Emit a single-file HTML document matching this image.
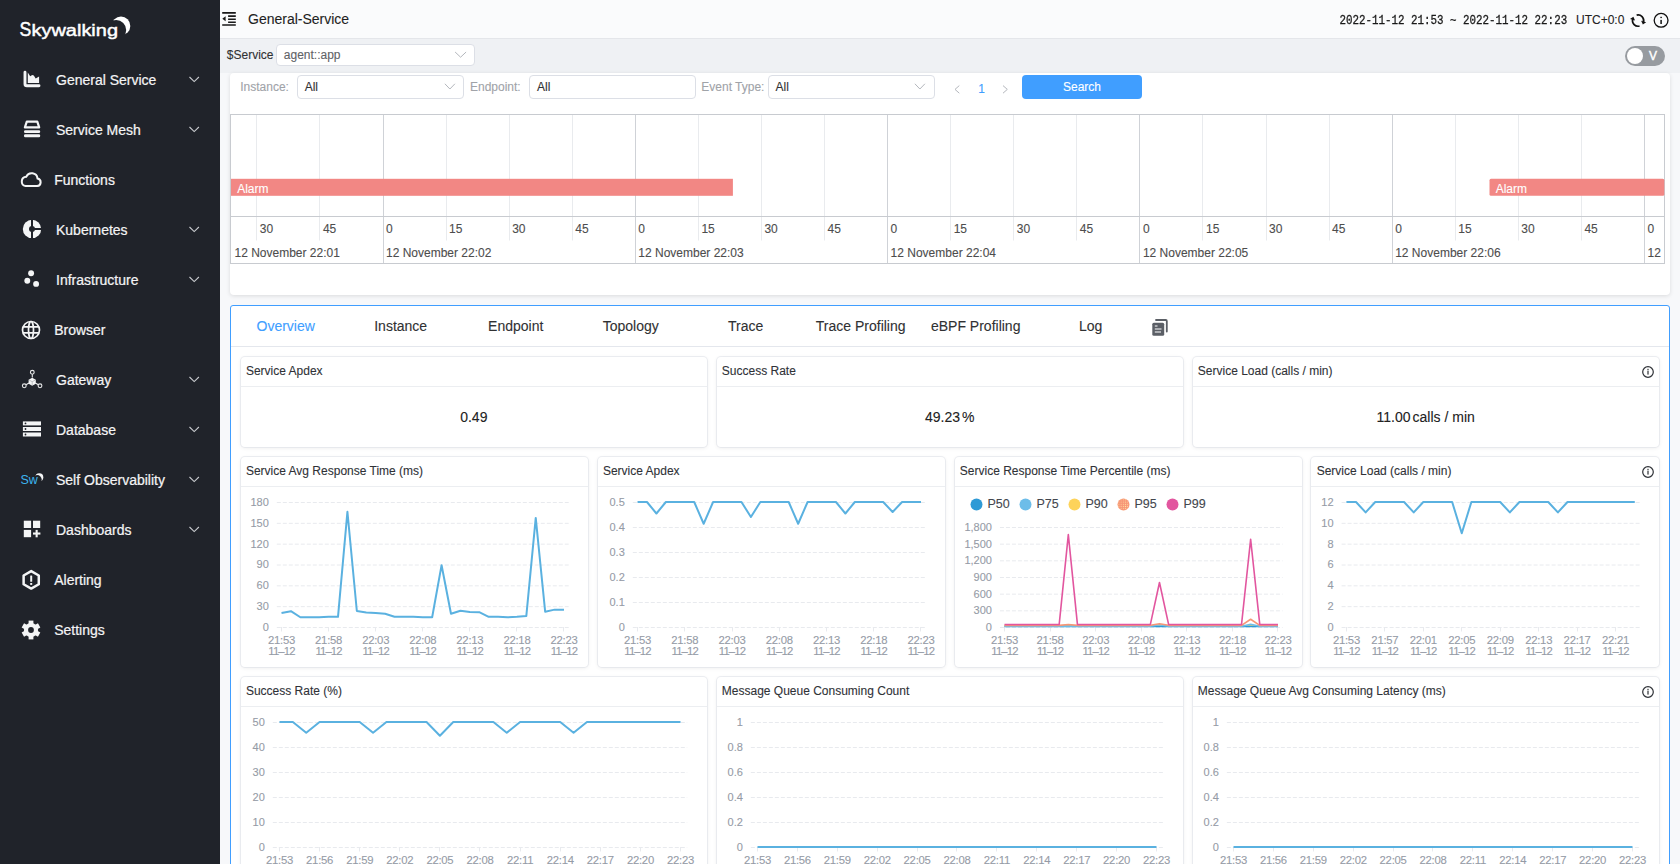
<!DOCTYPE html><html><head><meta charset="utf-8"><style>
html,body{margin:0;padding:0;width:1680px;height:864px;overflow:hidden;background:#f7f8fa;font-family:"Liberation Sans",sans-serif}
.t{position:absolute;white-space:nowrap;-webkit-text-stroke-width:0.1px}
.b{position:absolute}
svg{overflow:visible}
</style></head><body>
<div class="b" style="left:220px;top:0px;width:1460px;height:864px;background:#f7f8fa"></div>
<div class="b" style="left:220px;top:0px;width:1460px;height:38px;background:#fafbfc"></div>
<div class="b" style="left:220px;top:38px;width:1460px;height:35px;background:#eff1f4;border-top:1px solid #e4e6ea;box-sizing:border-box"></div>
<div class="b" style="left:0px;top:0px;width:220px;height:864px;background:#20232a"></div>
<div class="t" style="left:56.00px;top:73.05px;font-size:14px;line-height:14px;color:#f4f4f5;-webkit-text-stroke-width:0.22px">General Service</div>
<div class="t" style="left:56.00px;top:123.05px;font-size:14px;line-height:14px;color:#f4f4f5;-webkit-text-stroke-width:0.22px">Service Mesh</div>
<div class="t" style="left:54.20px;top:173.05px;font-size:14px;line-height:14px;color:#f4f4f5;-webkit-text-stroke-width:0.22px">Functions</div>
<div class="t" style="left:56.00px;top:223.05px;font-size:14px;line-height:14px;color:#f4f4f5;-webkit-text-stroke-width:0.22px">Kubernetes</div>
<div class="t" style="left:56.00px;top:273.05px;font-size:14px;line-height:14px;color:#f4f4f5;-webkit-text-stroke-width:0.22px">Infrastructure</div>
<div class="t" style="left:54.20px;top:323.05px;font-size:14px;line-height:14px;color:#f4f4f5;-webkit-text-stroke-width:0.22px">Browser</div>
<div class="t" style="left:56.00px;top:373.05px;font-size:14px;line-height:14px;color:#f4f4f5;-webkit-text-stroke-width:0.22px">Gateway</div>
<div class="t" style="left:56.00px;top:423.05px;font-size:14px;line-height:14px;color:#f4f4f5;-webkit-text-stroke-width:0.22px">Database</div>
<div class="t" style="left:56.00px;top:473.05px;font-size:14px;line-height:14px;color:#f4f4f5;-webkit-text-stroke-width:0.22px">Self Observability</div>
<div class="t" style="left:56.00px;top:523.05px;font-size:14px;line-height:14px;color:#f4f4f5;-webkit-text-stroke-width:0.22px">Dashboards</div>
<div class="t" style="left:54.20px;top:573.05px;font-size:14px;line-height:14px;color:#f4f4f5;-webkit-text-stroke-width:0.22px">Alerting</div>
<div class="t" style="left:54.20px;top:623.05px;font-size:14px;line-height:14px;color:#f4f4f5;-webkit-text-stroke-width:0.22px">Settings</div>
<svg class="b" style="left:0;top:0" width="220" height="864"><path d="M189.5,77.0 L194.2,81.6 L198.9,77.0" fill="none" stroke="#c9cbcf" stroke-width="1.1"/><path d="M189.5,127.0 L194.2,131.6 L198.9,127.0" fill="none" stroke="#c9cbcf" stroke-width="1.1"/><path d="M189.5,227.0 L194.2,231.6 L198.9,227.0" fill="none" stroke="#c9cbcf" stroke-width="1.1"/><path d="M189.5,277.0 L194.2,281.6 L198.9,277.0" fill="none" stroke="#c9cbcf" stroke-width="1.1"/><path d="M189.5,377.0 L194.2,381.6 L198.9,377.0" fill="none" stroke="#c9cbcf" stroke-width="1.1"/><path d="M189.5,427.0 L194.2,431.6 L198.9,427.0" fill="none" stroke="#c9cbcf" stroke-width="1.1"/><path d="M189.5,477.0 L194.2,481.6 L198.9,477.0" fill="none" stroke="#c9cbcf" stroke-width="1.1"/><path d="M189.5,527.0 L194.2,531.6 L198.9,527.0" fill="none" stroke="#c9cbcf" stroke-width="1.1"/><path d="M25,72.2 V84 Q25,85.8 26.8,85.8 H39" fill="none" stroke="#f4f5f6" stroke-width="2.9" stroke-linecap="round"/><path d="M27.8,72.6 L30.2,76.3 L32.2,75 L33.8,75.6 L35.7,78.6 L39.1,76.6 V83.1 H27.8 Z" fill="#f4f5f6"/><path d="M26.8,121.7 H37.3 L39.2,127.4 H24.9 Z" fill="none" stroke="#f4f5f6" stroke-width="2.2" stroke-linejoin="round"/><rect x="24" y="130.3" width="16.2" height="2.7" rx="1.3" fill="#f4f5f6"/><rect x="24" y="134.3" width="16.2" height="2.9" rx="1.3" fill="#f4f5f6"/><path d="M25.6,186.1 H37.2 A3.9,3.9 0 0 0 37.5,178.4 A5.9,5.9 0 0 0 26.3,176.7 A4.75,4.75 0 0 0 25.6,186.1 Z" fill="none" stroke="#f4f5f6" stroke-width="2"/><mask id="km"><rect x="0" y="200" width="60" height="60" fill="#fff"/><rect x="31" y="215" width="2" height="30" fill="#000"/><rect x="32" y="228" width="15" height="2" fill="#000"/><circle cx="32" cy="229" r="3" fill="#000"/></mask><circle cx="32" cy="228.9" r="9.2" fill="#f4f5f6" mask="url(#km)"/><circle cx="31.1" cy="273.3" r="2.95" fill="#f4f5f6"/><circle cx="27.3" cy="280.8" r="2.95" fill="#f4f5f6"/><circle cx="36.1" cy="283.9" r="2.95" fill="#f4f5f6"/><g fill="none" stroke="#f4f5f6" stroke-width="1.7"><circle cx="31" cy="330" r="8.5"/><ellipse cx="31" cy="330" rx="2.5" ry="8.5"/><path d="M23,326.9 H39 M23,332.9 H39"/></g><g fill="none" stroke="#e8e9ea" stroke-width="1.1"><circle cx="32.3" cy="372.3" r="1.9"/><circle cx="24.3" cy="385.8" r="1.9"/><circle cx="40" cy="385.8" r="1.9"/><path d="M32.3,374.2 V377.5 M26,384.8 L29,383 M38.3,384.8 L35.4,383"/></g><path d="M32.2,377.8 L35.8,379.8 V383.7 L32.2,385.7 L28.6,383.7 V379.8 Z" fill="#f4f5f6"/><path d="M32.2,381.7 V385.2 M32.2,381.7 L29.2,380.1 M32.2,381.7 L35.2,380.1" stroke="#9a9ca0" stroke-width="0.6" fill="none"/><rect x="22.9" y="421.4" width="18.1" height="4" fill="#f4f5f6"/><circle cx="25.5" cy="423.4" r="0.9" fill="#20232a"/><rect x="22.9" y="427" width="18.1" height="4" fill="#f4f5f6"/><circle cx="25.5" cy="429" r="0.9" fill="#20232a"/><rect x="22.9" y="432.5" width="18.1" height="4" fill="#f4f5f6"/><circle cx="25.5" cy="434.5" r="0.9" fill="#20232a"/><text x="20.6" y="484.2" font-family="Liberation Sans" font-size="12.5" fill="#3cb4ef" letter-spacing="-0.3">Sw</text><mask id="swm"><rect x="30" y="465" width="20" height="20" fill="#fff"/><circle cx="37.2" cy="479.6" r="4.5" fill="#000"/></mask><circle cx="39.3" cy="477.3" r="4" fill="#f4f5f6" mask="url(#swm)"/><rect x="23.8" y="520.7" width="7.3" height="7.3" fill="#f4f5f6"/><rect x="33" y="520.7" width="7.2" height="7.3" fill="#f4f5f6"/><rect x="23.8" y="529.9" width="7.3" height="7.3" fill="#f4f5f6"/><rect x="33" y="532.5" width="7.4" height="2.1" fill="#f4f5f6"/><rect x="35.6" y="529.9" width="2.1" height="7.4" fill="#f4f5f6"/><polygon points="31.20,571.10 38.78,575.48 38.78,584.23 31.20,588.60 23.62,584.23 23.62,575.48" fill="none" stroke="#f4f5f6" stroke-width="2.5" stroke-linejoin="round"/><rect x="30.2" y="575.4" width="2" height="6.3" rx="0.5" fill="#f4f5f6"/><rect x="30.2" y="583" width="2" height="1.9" fill="#f4f5f6"/><circle cx="31" cy="630" r="7.1" fill="#f4f5f6"/><rect x="28.6" y="620.6" width="4.8" height="4" fill="#f4f5f6" transform="rotate(0 31 630)"/><rect x="28.6" y="620.6" width="4.8" height="4" fill="#f4f5f6" transform="rotate(60 31 630)"/><rect x="28.6" y="620.6" width="4.8" height="4" fill="#f4f5f6" transform="rotate(120 31 630)"/><rect x="28.6" y="620.6" width="4.8" height="4" fill="#f4f5f6" transform="rotate(180 31 630)"/><rect x="28.6" y="620.6" width="4.8" height="4" fill="#f4f5f6" transform="rotate(240 31 630)"/><rect x="28.6" y="620.6" width="4.8" height="4" fill="#f4f5f6" transform="rotate(300 31 630)"/><circle cx="31" cy="630" r="2.9" fill="#20232a"/><text x="19.4" y="36.3" font-family="Liberation Sans" font-size="20.5" fill="#fff" stroke="#fff" stroke-width="0.45" textLength="11.8" lengthAdjust="spacingAndGlyphs">S</text><text x="31.5" y="36.3" font-family="Liberation Sans" font-size="16.9" fill="#fff" stroke="#fff" stroke-width="0.45" textLength="86.5" lengthAdjust="spacingAndGlyphs">kywalking</text><mask id="moon"><rect x="100" y="5" width="40" height="40" fill="#fff"/><circle cx="116.2" cy="30.1" r="10" fill="#000"/></mask><circle cx="121" cy="25.9" r="9.3" fill="#fff" mask="url(#moon)"/></svg>
<svg class="b" style="left:0;top:0" width="1680" height="40"><path d="M222.2,12.9 H235.8 M228.1,16.1 H235.8 M228.1,19.2 H235.8 M228.1,22.2 H235.8 M222.2,25 H235.8" stroke="#1a1a1a" stroke-width="1.6"/><path d="M222.3,18.7 L225.6,16.2 V21.3 Z" fill="#1a1a1a"/><path d="M1636.65,15.19 A5.6,5.6 0 0 1 1643.51,22.05" fill="none" stroke="#111" stroke-width="1.7"/><path d="M1642.84,24.56 L1646.18,22.14 L1641.15,20.80 Z" fill="#111"/><path d="M1639.55,26.01 A5.6,5.6 0 0 1 1632.69,19.15" fill="none" stroke="#111" stroke-width="1.7"/><path d="M1633.36,16.64 L1630.02,19.06 L1635.05,20.40 Z" fill="#111"/><circle cx="1661.1" cy="20.3" r="6.9" fill="none" stroke="#111" stroke-width="1.3"/><rect x="1660.35" y="19.9" width="1.5" height="4.1" fill="#111"/><rect x="1660.35" y="16.8" width="1.5" height="1.3" fill="#111"/></svg>
<div class="t" style="left:248.00px;top:12.45px;font-size:14px;line-height:14px;color:#1f1f1f;">General-Service</div>
<div class="t" style="left:1339.4px;top:14.12px;font-family:'Liberation Mono', monospace;font-size:10.85px;line-height:10.85px;color:#1a1a1a;-webkit-text-stroke:0.25px #1a1a1a;transform:scaleY(1.25);transform-origin:0 0;">2022-11-12 21:53 ~ 2022-11-12 22:23</div>
<div class="t" style="left:1576.00px;top:13.64px;font-size:12px;line-height:12px;color:#222;">UTC+0:0</div>
<div class="t" style="left:226.80px;top:49.14px;font-size:12px;line-height:12px;color:#303133;">$Service</div>
<div class="b" style="left:276px;top:44px;width:199px;height:22px;background:#fff;border:1px solid #dcdfe6;border-radius:4px;box-sizing:border-box"></div>
<div class="t" style="left:283.80px;top:49.14px;font-size:12px;line-height:12px;color:#606266;">agent::app</div>
<div class="b" style="left:1625px;top:46px;width:40px;height:20px;background:#979ba0;border-radius:10px;box-sizing:border-box"></div>
<div class="b" style="left:1627px;top:48px;width:16px;height:16px;background:#fff;border-radius:50%"></div>
<div class="t" style="left:1649.00px;top:49.84px;font-size:12px;line-height:12px;color:#fff;-webkit-text-stroke-width:0.4px">V</div>
<div class="b" style="left:229.5px;top:73px;width:1440.5px;height:222px;background:#fff;border-radius:4px;box-shadow:0 1px 4px rgba(0,0,0,0.12)"></div>
<div class="t" style="left:240.20px;top:80.74px;font-size:12px;line-height:12px;color:#a0a3a8;">Instance:</div>
<div class="b" style="left:297px;top:75px;width:167px;height:23.5px;background:#fff;border:1px solid #dcdfe6;border-radius:4px;box-sizing:border-box"></div>
<div class="t" style="left:304.70px;top:80.84px;font-size:12px;line-height:12px;color:#303133;">All</div>
<div class="t" style="left:470.00px;top:80.74px;font-size:12px;line-height:12px;color:#a0a3a8;">Endpoint:</div>
<div class="b" style="left:529px;top:75px;width:167px;height:23.5px;background:#fff;border:1px solid #dcdfe6;border-radius:4px;box-sizing:border-box"></div>
<div class="t" style="left:537.00px;top:80.84px;font-size:12px;line-height:12px;color:#303133;">All</div>
<div class="t" style="left:701.30px;top:80.74px;font-size:12px;line-height:12px;color:#a0a3a8;">Event Type:</div>
<div class="b" style="left:768px;top:75px;width:166.5px;height:23.5px;background:#fff;border:1px solid #dcdfe6;border-radius:4px;box-sizing:border-box"></div>
<div class="t" style="left:775.60px;top:80.84px;font-size:12px;line-height:12px;color:#303133;">All</div>
<div class="b" style="left:1022px;top:75px;width:120px;height:23.5px;background:#409eff;border-radius:4px"></div>
<div class="t" style="left:1022.00px;width:120px;top:80.74px;font-size:12px;line-height:12px;color:#fff;text-align:center;">Search</div>
<div class="t" style="left:978.30px;top:82.74px;font-size:12px;line-height:12px;color:#409eff;">1</div>
<svg class="b" style="left:0;top:0" width="1680" height="110"><path d="M455.1,52.0 L460.6,57.2 L466.1,52.0" fill="none" stroke="#b4b7bd" stroke-width="1"/><path d="M444.9,83.80000000000001 L449.9,89.0 L454.9,83.80000000000001" fill="none" stroke="#b4b7bd" stroke-width="1"/><path d="M914.9,83.80000000000001 L919.9,89.0 L924.9,83.80000000000001" fill="none" stroke="#b4b7bd" stroke-width="1"/><path d="M959.3,85.6 L955,89.4 L959.3,93.2 M1003,85.6 L1007.3,89.4 L1003,93.2" fill="none" stroke="#b4b7bd" stroke-width="1"/></svg>
<svg class="b" style="left:0;top:0" width="1680" height="300"><line x1="256.50" y1="114.5" x2="256.50" y2="240.5" stroke="#e9ebee" stroke-width="1"/><line x1="319.50" y1="114.5" x2="319.50" y2="240.5" stroke="#e9ebee" stroke-width="1"/><line x1="446.50" y1="114.5" x2="446.50" y2="240.5" stroke="#e9ebee" stroke-width="1"/><line x1="509.50" y1="114.5" x2="509.50" y2="240.5" stroke="#e9ebee" stroke-width="1"/><line x1="572.50" y1="114.5" x2="572.50" y2="240.5" stroke="#e9ebee" stroke-width="1"/><line x1="698.50" y1="114.5" x2="698.50" y2="240.5" stroke="#e9ebee" stroke-width="1"/><line x1="761.50" y1="114.5" x2="761.50" y2="240.5" stroke="#e9ebee" stroke-width="1"/><line x1="824.50" y1="114.5" x2="824.50" y2="240.5" stroke="#e9ebee" stroke-width="1"/><line x1="950.50" y1="114.5" x2="950.50" y2="240.5" stroke="#e9ebee" stroke-width="1"/><line x1="1013.50" y1="114.5" x2="1013.50" y2="240.5" stroke="#e9ebee" stroke-width="1"/><line x1="1076.50" y1="114.5" x2="1076.50" y2="240.5" stroke="#e9ebee" stroke-width="1"/><line x1="1202.50" y1="114.5" x2="1202.50" y2="240.5" stroke="#e9ebee" stroke-width="1"/><line x1="1266.50" y1="114.5" x2="1266.50" y2="240.5" stroke="#e9ebee" stroke-width="1"/><line x1="1329.50" y1="114.5" x2="1329.50" y2="240.5" stroke="#e9ebee" stroke-width="1"/><line x1="1455.50" y1="114.5" x2="1455.50" y2="240.5" stroke="#e9ebee" stroke-width="1"/><line x1="1518.50" y1="114.5" x2="1518.50" y2="240.5" stroke="#e9ebee" stroke-width="1"/><line x1="1581.50" y1="114.5" x2="1581.50" y2="240.5" stroke="#e9ebee" stroke-width="1"/><line x1="383.50" y1="114.5" x2="383.50" y2="263.5" stroke="#cfd2d7" stroke-width="1"/><line x1="635.50" y1="114.5" x2="635.50" y2="263.5" stroke="#cfd2d7" stroke-width="1"/><line x1="887.50" y1="114.5" x2="887.50" y2="263.5" stroke="#cfd2d7" stroke-width="1"/><line x1="1139.50" y1="114.5" x2="1139.50" y2="263.5" stroke="#cfd2d7" stroke-width="1"/><line x1="1392.50" y1="114.5" x2="1392.50" y2="263.5" stroke="#cfd2d7" stroke-width="1"/><line x1="1644.50" y1="114.5" x2="1644.50" y2="263.5" stroke="#cfd2d7" stroke-width="1"/><rect x="230.5" y="114.5" width="1434.00" height="149.00" fill="none" stroke="#c8cbd0" stroke-width="1"/><line x1="230.5" y1="216.5" x2="1664.5" y2="216.5" stroke="#c8cbd0" stroke-width="1"/><rect x="231" y="178.8" width="501.9" height="17" fill="#f28784"/><rect x="1489.5" y="178.8" width="174.8" height="17" rx="1.5" fill="#f28784"/></svg>
<div class="t" style="left:237.20px;top:183.24px;font-size:12px;line-height:12px;color:#fff;">Alarm</div>
<div class="t" style="left:1495.70px;top:183.24px;font-size:12px;line-height:12px;color:#fff;">Alarm</div>
<div class="t" style="left:259.85px;top:222.84px;font-size:12px;line-height:12px;color:#4d4d4d;">30</div>
<div class="t" style="left:322.93px;top:222.84px;font-size:12px;line-height:12px;color:#4d4d4d;">45</div>
<div class="t" style="left:449.07px;top:222.84px;font-size:12px;line-height:12px;color:#4d4d4d;">15</div>
<div class="t" style="left:512.15px;top:222.84px;font-size:12px;line-height:12px;color:#4d4d4d;">30</div>
<div class="t" style="left:575.23px;top:222.84px;font-size:12px;line-height:12px;color:#4d4d4d;">45</div>
<div class="t" style="left:701.38px;top:222.84px;font-size:12px;line-height:12px;color:#4d4d4d;">15</div>
<div class="t" style="left:764.45px;top:222.84px;font-size:12px;line-height:12px;color:#4d4d4d;">30</div>
<div class="t" style="left:827.52px;top:222.84px;font-size:12px;line-height:12px;color:#4d4d4d;">45</div>
<div class="t" style="left:953.68px;top:222.84px;font-size:12px;line-height:12px;color:#4d4d4d;">15</div>
<div class="t" style="left:1016.75px;top:222.84px;font-size:12px;line-height:12px;color:#4d4d4d;">30</div>
<div class="t" style="left:1079.83px;top:222.84px;font-size:12px;line-height:12px;color:#4d4d4d;">45</div>
<div class="t" style="left:1205.98px;top:222.84px;font-size:12px;line-height:12px;color:#4d4d4d;">15</div>
<div class="t" style="left:1269.05px;top:222.84px;font-size:12px;line-height:12px;color:#4d4d4d;">30</div>
<div class="t" style="left:1332.12px;top:222.84px;font-size:12px;line-height:12px;color:#4d4d4d;">45</div>
<div class="t" style="left:1458.28px;top:222.84px;font-size:12px;line-height:12px;color:#4d4d4d;">15</div>
<div class="t" style="left:1521.35px;top:222.84px;font-size:12px;line-height:12px;color:#4d4d4d;">30</div>
<div class="t" style="left:1584.43px;top:222.84px;font-size:12px;line-height:12px;color:#4d4d4d;">45</div>
<div class="t" style="left:386.00px;top:222.84px;font-size:12px;line-height:12px;color:#4d4d4d;">0</div>
<div class="t" style="left:638.30px;top:222.84px;font-size:12px;line-height:12px;color:#4d4d4d;">0</div>
<div class="t" style="left:890.60px;top:222.84px;font-size:12px;line-height:12px;color:#4d4d4d;">0</div>
<div class="t" style="left:1142.90px;top:222.84px;font-size:12px;line-height:12px;color:#4d4d4d;">0</div>
<div class="t" style="left:1395.20px;top:222.84px;font-size:12px;line-height:12px;color:#4d4d4d;">0</div>
<div class="t" style="left:1647.50px;top:222.84px;font-size:12px;line-height:12px;color:#4d4d4d;">0</div>
<div class="t" style="left:234.50px;top:247.14px;font-size:12px;line-height:12px;color:#4d4d4d;">12 November 22:01</div>
<div class="t" style="left:386.00px;top:247.14px;font-size:12px;line-height:12px;color:#4d4d4d;">12 November 22:02</div>
<div class="t" style="left:638.30px;top:247.14px;font-size:12px;line-height:12px;color:#4d4d4d;">12 November 22:03</div>
<div class="t" style="left:890.60px;top:247.14px;font-size:12px;line-height:12px;color:#4d4d4d;">12 November 22:04</div>
<div class="t" style="left:1142.90px;top:247.14px;font-size:12px;line-height:12px;color:#4d4d4d;">12 November 22:05</div>
<div class="t" style="left:1395.20px;top:247.14px;font-size:12px;line-height:12px;color:#4d4d4d;">12 November 22:06</div>
<div class="t" style="left:1647.50px;top:247.14px;font-size:12px;line-height:12px;color:#4d4d4d;">12</div>
<div class="b" style="left:230px;top:305px;width:1440px;height:600px;background:#fff;border:1px solid #409eff;border-radius:3px;box-sizing:border-box"></div>
<div class="b" style="left:231px;top:346px;width:1438px;height:1px;background:#e4e7ed"></div>
<div class="t" style="left:228.20px;width:115px;top:319.35px;font-size:14px;line-height:14px;color:#409eff;text-align:center;">Overview</div>
<div class="t" style="left:343.20px;width:115px;top:319.35px;font-size:14px;line-height:14px;color:#303133;text-align:center;">Instance</div>
<div class="t" style="left:458.20px;width:115px;top:319.35px;font-size:14px;line-height:14px;color:#303133;text-align:center;">Endpoint</div>
<div class="t" style="left:573.20px;width:115px;top:319.35px;font-size:14px;line-height:14px;color:#303133;text-align:center;">Topology</div>
<div class="t" style="left:688.20px;width:115px;top:319.35px;font-size:14px;line-height:14px;color:#303133;text-align:center;">Trace</div>
<div class="t" style="left:803.20px;width:115px;top:319.35px;font-size:14px;line-height:14px;color:#303133;text-align:center;">Trace Profiling</div>
<div class="t" style="left:918.20px;width:115px;top:319.35px;font-size:14px;line-height:14px;color:#303133;text-align:center;">eBPF Profiling</div>
<div class="t" style="left:1033.20px;width:115px;top:319.35px;font-size:14px;line-height:14px;color:#303133;text-align:center;">Log</div>
<svg class="b" style="left:1148px;top:315px" width="24" height="24"><g transform="translate(-1148,-315)"><path d="M1156,320 H1165.8 Q1166.8,320 1166.8,321 V331.6" fill="none" stroke="#5b5f66" stroke-width="1.8" stroke-linecap="round"/><rect x="1152.3" y="322.7" width="11.9" height="13" rx="1.5" fill="#5b5f66"/><path d="M1154.8,326 H1157.5 M1154.8,329 H1161.5 M1154.8,332 H1161" stroke="#fff" stroke-width="1.2"/></g></svg>
<div class="b" style="left:240.6px;top:357px;width:466.4px;height:90px;background:#fff;border-radius:4px;box-shadow:0 0 0 1px rgba(215,220,228,0.45),0 1px 4px rgba(0,0,0,0.08);"></div>
<div class="b" style="left:240.6px;top:386px;width:466.4px;height:1px;background:#eceef1"></div>
<div class="t" style="left:245.90px;top:364.84px;font-size:12px;line-height:12px;color:#2f3237;">Service Apdex</div>
<div class="b" style="left:716.5px;top:357px;width:466.4px;height:90px;background:#fff;border-radius:4px;box-shadow:0 0 0 1px rgba(215,220,228,0.45),0 1px 4px rgba(0,0,0,0.08);"></div>
<div class="b" style="left:716.5px;top:386px;width:466.4px;height:1px;background:#eceef1"></div>
<div class="t" style="left:721.80px;top:364.84px;font-size:12px;line-height:12px;color:#2f3237;">Success Rate</div>
<div class="b" style="left:1192.5px;top:357px;width:466.4px;height:90px;background:#fff;border-radius:4px;box-shadow:0 0 0 1px rgba(215,220,228,0.45),0 1px 4px rgba(0,0,0,0.08);"></div>
<div class="b" style="left:1192.5px;top:386px;width:466.4px;height:1px;background:#eceef1"></div>
<div class="t" style="left:1197.80px;top:364.84px;font-size:12px;line-height:12px;color:#2f3237;">Service Load (calls / min)</div>
<svg class="b" style="left:1641.9px;top:365px" width="14" height="14"><circle cx="6" cy="7" r="5.3" fill="none" stroke="#2f3237" stroke-width="1.2"/><rect x="5.4" y="5.6" width="1.2" height="4" fill="#2f3237"/><rect x="5.4" y="3.8" width="1.2" height="1.2" fill="#2f3237"/></svg>
<div class="t" style="left:323.80px;width:300px;top:410.15px;font-size:14px;line-height:14px;color:#222;text-align:center;">0.49</div>
<div class="t" style="left:799.70px;width:300px;top:410.15px;font-size:14px;line-height:14px;color:#222;text-align:center;">49.23<span style="margin-left:2px">%</span></div>
<div class="t" style="left:1275.70px;width:300px;top:410.15px;font-size:14px;line-height:14px;color:#222;text-align:center;">11.00<span style="margin-left:2px">calls / min</span></div>
<div class="b" style="left:240.6px;top:457px;width:347.5px;height:210px;background:#fff;border-radius:4px;box-shadow:0 0 0 1px rgba(215,220,228,0.45),0 1px 4px rgba(0,0,0,0.08);"></div>
<div class="b" style="left:240.6px;top:486px;width:347.5px;height:1px;background:#eceef1"></div>
<div class="t" style="left:245.90px;top:464.84px;font-size:12px;line-height:12px;color:#2f3237;">Service Avg Response Time (ms)</div>
<div class="b" style="left:597.6px;top:457px;width:347.5px;height:210px;background:#fff;border-radius:4px;box-shadow:0 0 0 1px rgba(215,220,228,0.45),0 1px 4px rgba(0,0,0,0.08);"></div>
<div class="b" style="left:597.6px;top:486px;width:347.5px;height:1px;background:#eceef1"></div>
<div class="t" style="left:602.90px;top:464.84px;font-size:12px;line-height:12px;color:#2f3237;">Service Apdex</div>
<div class="b" style="left:954.5px;top:457px;width:347.5px;height:210px;background:#fff;border-radius:4px;box-shadow:0 0 0 1px rgba(215,220,228,0.45),0 1px 4px rgba(0,0,0,0.08);"></div>
<div class="b" style="left:954.5px;top:486px;width:347.5px;height:1px;background:#eceef1"></div>
<div class="t" style="left:959.80px;top:464.84px;font-size:12px;line-height:12px;color:#2f3237;">Service Response Time Percentile (ms)</div>
<div class="b" style="left:1311.4px;top:457px;width:347.5px;height:210px;background:#fff;border-radius:4px;box-shadow:0 0 0 1px rgba(215,220,228,0.45),0 1px 4px rgba(0,0,0,0.08);"></div>
<div class="b" style="left:1311.4px;top:486px;width:347.5px;height:1px;background:#eceef1"></div>
<div class="t" style="left:1316.70px;top:464.84px;font-size:12px;line-height:12px;color:#2f3237;">Service Load (calls / min)</div>
<svg class="b" style="left:1641.9px;top:465px" width="14" height="14"><circle cx="6" cy="7" r="5.3" fill="none" stroke="#2f3237" stroke-width="1.2"/><rect x="5.4" y="5.6" width="1.2" height="4" fill="#2f3237"/><rect x="5.4" y="3.8" width="1.2" height="1.2" fill="#2f3237"/></svg>
<div class="t" style="left:208.80px;width:60px;top:621.99px;font-size:11px;line-height:11px;color:#959ba6;text-align:right;">0</div>
<div class="t" style="left:208.80px;width:60px;top:601.16px;font-size:11px;line-height:11px;color:#959ba6;text-align:right;">30</div>
<div class="t" style="left:208.80px;width:60px;top:580.32px;font-size:11px;line-height:11px;color:#959ba6;text-align:right;">60</div>
<div class="t" style="left:208.80px;width:60px;top:559.49px;font-size:11px;line-height:11px;color:#959ba6;text-align:right;">90</div>
<div class="t" style="left:208.80px;width:60px;top:538.66px;font-size:11px;line-height:11px;color:#959ba6;text-align:right;">120</div>
<div class="t" style="left:208.80px;width:60px;top:517.82px;font-size:11px;line-height:11px;color:#959ba6;text-align:right;">150</div>
<div class="t" style="left:208.80px;width:60px;top:496.99px;font-size:11px;line-height:11px;color:#959ba6;text-align:right;">180</div>
<div class="t" style="left:251.51px;width:60px;top:635.13px;font-size:11.3px;line-height:11.3px;color:#959ba6;text-align:center;letter-spacing:-0.25px">21:53</div>
<div class="t" style="left:251.51px;width:60px;top:646.33px;font-size:11.3px;line-height:11.3px;color:#959ba6;text-align:center;letter-spacing:-0.85px">11–12</div>
<div class="t" style="left:298.59px;width:60px;top:635.13px;font-size:11.3px;line-height:11.3px;color:#959ba6;text-align:center;letter-spacing:-0.25px">21:58</div>
<div class="t" style="left:298.59px;width:60px;top:646.33px;font-size:11.3px;line-height:11.3px;color:#959ba6;text-align:center;letter-spacing:-0.85px">11–12</div>
<div class="t" style="left:345.67px;width:60px;top:635.13px;font-size:11.3px;line-height:11.3px;color:#959ba6;text-align:center;letter-spacing:-0.25px">22:03</div>
<div class="t" style="left:345.67px;width:60px;top:646.33px;font-size:11.3px;line-height:11.3px;color:#959ba6;text-align:center;letter-spacing:-0.85px">11–12</div>
<div class="t" style="left:392.75px;width:60px;top:635.13px;font-size:11.3px;line-height:11.3px;color:#959ba6;text-align:center;letter-spacing:-0.25px">22:08</div>
<div class="t" style="left:392.75px;width:60px;top:646.33px;font-size:11.3px;line-height:11.3px;color:#959ba6;text-align:center;letter-spacing:-0.85px">11–12</div>
<div class="t" style="left:439.83px;width:60px;top:635.13px;font-size:11.3px;line-height:11.3px;color:#959ba6;text-align:center;letter-spacing:-0.25px">22:13</div>
<div class="t" style="left:439.83px;width:60px;top:646.33px;font-size:11.3px;line-height:11.3px;color:#959ba6;text-align:center;letter-spacing:-0.85px">11–12</div>
<div class="t" style="left:486.91px;width:60px;top:635.13px;font-size:11.3px;line-height:11.3px;color:#959ba6;text-align:center;letter-spacing:-0.25px">22:18</div>
<div class="t" style="left:486.91px;width:60px;top:646.33px;font-size:11.3px;line-height:11.3px;color:#959ba6;text-align:center;letter-spacing:-0.85px">11–12</div>
<div class="t" style="left:533.99px;width:60px;top:635.13px;font-size:11.3px;line-height:11.3px;color:#959ba6;text-align:center;letter-spacing:-0.25px">22:23</div>
<div class="t" style="left:533.99px;width:60px;top:646.33px;font-size:11.3px;line-height:11.3px;color:#959ba6;text-align:center;letter-spacing:-0.85px">11–12</div>
<svg class="b" style="left:240px;top:457px" width="349" height="210"><line x1="36.80" y1="170.50" x2="328.70" y2="170.50" stroke="#e8eaee" stroke-width="1" stroke-dasharray="4 2"/><line x1="36.80" y1="149.67" x2="328.70" y2="149.67" stroke="#e8eaee" stroke-width="1" stroke-dasharray="4 2"/><line x1="36.80" y1="128.83" x2="328.70" y2="128.83" stroke="#e8eaee" stroke-width="1" stroke-dasharray="4 2"/><line x1="36.80" y1="108.00" x2="328.70" y2="108.00" stroke="#e8eaee" stroke-width="1" stroke-dasharray="4 2"/><line x1="36.80" y1="87.17" x2="328.70" y2="87.17" stroke="#e8eaee" stroke-width="1" stroke-dasharray="4 2"/><line x1="36.80" y1="66.33" x2="328.70" y2="66.33" stroke="#e8eaee" stroke-width="1" stroke-dasharray="4 2"/><line x1="36.80" y1="45.50" x2="328.70" y2="45.50" stroke="#e8eaee" stroke-width="1" stroke-dasharray="4 2"/><line x1="41.50" y1="170" x2="41.50" y2="174.50" stroke="#e8eaee" stroke-width="1"/><line x1="88.50" y1="170" x2="88.50" y2="174.50" stroke="#e8eaee" stroke-width="1"/><line x1="135.50" y1="170" x2="135.50" y2="174.50" stroke="#e8eaee" stroke-width="1"/><line x1="182.50" y1="170" x2="182.50" y2="174.50" stroke="#e8eaee" stroke-width="1"/><line x1="229.50" y1="170" x2="229.50" y2="174.50" stroke="#e8eaee" stroke-width="1"/><line x1="276.50" y1="170" x2="276.50" y2="174.50" stroke="#e8eaee" stroke-width="1"/><line x1="323.50" y1="170" x2="323.50" y2="174.50" stroke="#e8eaee" stroke-width="1"/><polyline points="41.51,155.97 50.92,154.17 60.34,160.28 69.76,160.28 79.17,160.28 88.59,159.79 98.00,159.79 107.42,54.72 116.84,154.03 126.25,155.42 135.67,156.11 145.09,156.81 154.50,159.79 163.92,159.79 173.33,159.79 182.75,160.28 192.17,160.28 201.58,108.19 211.00,156.81 220.41,153.68 229.83,154.93 239.25,155.21 248.66,159.79 258.08,159.79 267.50,160.28 276.91,159.79 286.33,158.89 295.74,60.97 305.16,154.72 314.58,152.64 323.99,152.64" fill="none" stroke="#5ab1e0" stroke-width="2" stroke-linejoin="round"/></svg>
<div class="t" style="left:564.80px;width:60px;top:621.99px;font-size:11px;line-height:11px;color:#959ba6;text-align:right;">0</div>
<div class="t" style="left:564.80px;width:60px;top:596.99px;font-size:11px;line-height:11px;color:#959ba6;text-align:right;">0.1</div>
<div class="t" style="left:564.80px;width:60px;top:571.99px;font-size:11px;line-height:11px;color:#959ba6;text-align:right;">0.2</div>
<div class="t" style="left:564.80px;width:60px;top:546.99px;font-size:11px;line-height:11px;color:#959ba6;text-align:right;">0.3</div>
<div class="t" style="left:564.80px;width:60px;top:521.99px;font-size:11px;line-height:11px;color:#959ba6;text-align:right;">0.4</div>
<div class="t" style="left:564.80px;width:60px;top:496.99px;font-size:11px;line-height:11px;color:#959ba6;text-align:right;">0.5</div>
<div class="t" style="left:607.52px;width:60px;top:635.13px;font-size:11.3px;line-height:11.3px;color:#959ba6;text-align:center;letter-spacing:-0.25px">21:53</div>
<div class="t" style="left:607.52px;width:60px;top:646.33px;font-size:11.3px;line-height:11.3px;color:#959ba6;text-align:center;letter-spacing:-0.85px">11–12</div>
<div class="t" style="left:654.77px;width:60px;top:635.13px;font-size:11.3px;line-height:11.3px;color:#959ba6;text-align:center;letter-spacing:-0.25px">21:58</div>
<div class="t" style="left:654.77px;width:60px;top:646.33px;font-size:11.3px;line-height:11.3px;color:#959ba6;text-align:center;letter-spacing:-0.85px">11–12</div>
<div class="t" style="left:702.01px;width:60px;top:635.13px;font-size:11.3px;line-height:11.3px;color:#959ba6;text-align:center;letter-spacing:-0.25px">22:03</div>
<div class="t" style="left:702.01px;width:60px;top:646.33px;font-size:11.3px;line-height:11.3px;color:#959ba6;text-align:center;letter-spacing:-0.85px">11–12</div>
<div class="t" style="left:749.25px;width:60px;top:635.13px;font-size:11.3px;line-height:11.3px;color:#959ba6;text-align:center;letter-spacing:-0.25px">22:08</div>
<div class="t" style="left:749.25px;width:60px;top:646.33px;font-size:11.3px;line-height:11.3px;color:#959ba6;text-align:center;letter-spacing:-0.85px">11–12</div>
<div class="t" style="left:796.49px;width:60px;top:635.13px;font-size:11.3px;line-height:11.3px;color:#959ba6;text-align:center;letter-spacing:-0.25px">22:13</div>
<div class="t" style="left:796.49px;width:60px;top:646.33px;font-size:11.3px;line-height:11.3px;color:#959ba6;text-align:center;letter-spacing:-0.85px">11–12</div>
<div class="t" style="left:843.73px;width:60px;top:635.13px;font-size:11.3px;line-height:11.3px;color:#959ba6;text-align:center;letter-spacing:-0.25px">22:18</div>
<div class="t" style="left:843.73px;width:60px;top:646.33px;font-size:11.3px;line-height:11.3px;color:#959ba6;text-align:center;letter-spacing:-0.85px">11–12</div>
<div class="t" style="left:890.98px;width:60px;top:635.13px;font-size:11.3px;line-height:11.3px;color:#959ba6;text-align:center;letter-spacing:-0.25px">22:23</div>
<div class="t" style="left:890.98px;width:60px;top:646.33px;font-size:11.3px;line-height:11.3px;color:#959ba6;text-align:center;letter-spacing:-0.85px">11–12</div>
<svg class="b" style="left:597px;top:457px" width="349" height="210"><line x1="35.80" y1="170.50" x2="328.70" y2="170.50" stroke="#e8eaee" stroke-width="1" stroke-dasharray="4 2"/><line x1="35.80" y1="145.50" x2="328.70" y2="145.50" stroke="#e8eaee" stroke-width="1" stroke-dasharray="4 2"/><line x1="35.80" y1="120.50" x2="328.70" y2="120.50" stroke="#e8eaee" stroke-width="1" stroke-dasharray="4 2"/><line x1="35.80" y1="95.50" x2="328.70" y2="95.50" stroke="#e8eaee" stroke-width="1" stroke-dasharray="4 2"/><line x1="35.80" y1="70.50" x2="328.70" y2="70.50" stroke="#e8eaee" stroke-width="1" stroke-dasharray="4 2"/><line x1="35.80" y1="45.50" x2="328.70" y2="45.50" stroke="#e8eaee" stroke-width="1" stroke-dasharray="4 2"/><line x1="40.50" y1="170" x2="40.50" y2="174.50" stroke="#e8eaee" stroke-width="1"/><line x1="87.50" y1="170" x2="87.50" y2="174.50" stroke="#e8eaee" stroke-width="1"/><line x1="135.50" y1="170" x2="135.50" y2="174.50" stroke="#e8eaee" stroke-width="1"/><line x1="182.50" y1="170" x2="182.50" y2="174.50" stroke="#e8eaee" stroke-width="1"/><line x1="229.50" y1="170" x2="229.50" y2="174.50" stroke="#e8eaee" stroke-width="1"/><line x1="276.50" y1="170" x2="276.50" y2="174.50" stroke="#e8eaee" stroke-width="1"/><line x1="323.50" y1="170" x2="323.50" y2="174.50" stroke="#e8eaee" stroke-width="1"/><polyline points="40.52,45.00 49.97,45.00 59.42,56.50 68.87,45.00 78.32,45.00 87.77,45.00 97.21,45.00 106.66,66.75 116.11,45.00 125.56,45.00 135.01,45.00 144.46,45.00 153.90,60.00 163.35,45.00 172.80,45.00 182.25,45.00 191.70,45.00 201.15,66.75 210.60,45.00 220.04,45.00 229.49,45.00 238.94,45.00 248.39,56.50 257.84,45.00 267.29,45.00 276.73,45.00 286.18,45.00 295.63,55.00 305.08,45.00 314.53,45.00 323.98,45.00" fill="none" stroke="#5ab1e0" stroke-width="2" stroke-linejoin="round"/></svg>
<div class="t" style="left:931.95px;width:60px;top:621.99px;font-size:11px;line-height:11px;color:#959ba6;text-align:right;">0</div>
<div class="t" style="left:931.95px;width:60px;top:605.32px;font-size:11px;line-height:11px;color:#959ba6;text-align:right;">300</div>
<div class="t" style="left:931.95px;width:60px;top:588.66px;font-size:11px;line-height:11px;color:#959ba6;text-align:right;">600</div>
<div class="t" style="left:931.95px;width:60px;top:571.99px;font-size:11px;line-height:11px;color:#959ba6;text-align:right;">900</div>
<div class="t" style="left:931.95px;width:60px;top:555.32px;font-size:11px;line-height:11px;color:#959ba6;text-align:right;">1,200</div>
<div class="t" style="left:931.95px;width:60px;top:538.66px;font-size:11px;line-height:11px;color:#959ba6;text-align:right;">1,500</div>
<div class="t" style="left:931.95px;width:60px;top:521.99px;font-size:11px;line-height:11px;color:#959ba6;text-align:right;">1,800</div>
<div class="t" style="left:974.51px;width:60px;top:635.13px;font-size:11.3px;line-height:11.3px;color:#959ba6;text-align:center;letter-spacing:-0.25px">21:53</div>
<div class="t" style="left:974.51px;width:60px;top:646.33px;font-size:11.3px;line-height:11.3px;color:#959ba6;text-align:center;letter-spacing:-0.85px">11–12</div>
<div class="t" style="left:1020.09px;width:60px;top:635.13px;font-size:11.3px;line-height:11.3px;color:#959ba6;text-align:center;letter-spacing:-0.25px">21:58</div>
<div class="t" style="left:1020.09px;width:60px;top:646.33px;font-size:11.3px;line-height:11.3px;color:#959ba6;text-align:center;letter-spacing:-0.85px">11–12</div>
<div class="t" style="left:1065.67px;width:60px;top:635.13px;font-size:11.3px;line-height:11.3px;color:#959ba6;text-align:center;letter-spacing:-0.25px">22:03</div>
<div class="t" style="left:1065.67px;width:60px;top:646.33px;font-size:11.3px;line-height:11.3px;color:#959ba6;text-align:center;letter-spacing:-0.85px">11–12</div>
<div class="t" style="left:1111.25px;width:60px;top:635.13px;font-size:11.3px;line-height:11.3px;color:#959ba6;text-align:center;letter-spacing:-0.25px">22:08</div>
<div class="t" style="left:1111.25px;width:60px;top:646.33px;font-size:11.3px;line-height:11.3px;color:#959ba6;text-align:center;letter-spacing:-0.85px">11–12</div>
<div class="t" style="left:1156.83px;width:60px;top:635.13px;font-size:11.3px;line-height:11.3px;color:#959ba6;text-align:center;letter-spacing:-0.25px">22:13</div>
<div class="t" style="left:1156.83px;width:60px;top:646.33px;font-size:11.3px;line-height:11.3px;color:#959ba6;text-align:center;letter-spacing:-0.85px">11–12</div>
<div class="t" style="left:1202.41px;width:60px;top:635.13px;font-size:11.3px;line-height:11.3px;color:#959ba6;text-align:center;letter-spacing:-0.25px">22:18</div>
<div class="t" style="left:1202.41px;width:60px;top:646.33px;font-size:11.3px;line-height:11.3px;color:#959ba6;text-align:center;letter-spacing:-0.85px">11–12</div>
<div class="t" style="left:1247.99px;width:60px;top:635.13px;font-size:11.3px;line-height:11.3px;color:#959ba6;text-align:center;letter-spacing:-0.25px">22:23</div>
<div class="t" style="left:1247.99px;width:60px;top:646.33px;font-size:11.3px;line-height:11.3px;color:#959ba6;text-align:center;letter-spacing:-0.85px">11–12</div>
<svg class="b" style="left:954px;top:457px" width="349" height="210"><line x1="45.95" y1="170.50" x2="328.55" y2="170.50" stroke="#e8eaee" stroke-width="1" stroke-dasharray="4 2"/><line x1="45.95" y1="153.83" x2="328.55" y2="153.83" stroke="#e8eaee" stroke-width="1" stroke-dasharray="4 2"/><line x1="45.95" y1="137.17" x2="328.55" y2="137.17" stroke="#e8eaee" stroke-width="1" stroke-dasharray="4 2"/><line x1="45.95" y1="120.50" x2="328.55" y2="120.50" stroke="#e8eaee" stroke-width="1" stroke-dasharray="4 2"/><line x1="45.95" y1="103.83" x2="328.55" y2="103.83" stroke="#e8eaee" stroke-width="1" stroke-dasharray="4 2"/><line x1="45.95" y1="87.17" x2="328.55" y2="87.17" stroke="#e8eaee" stroke-width="1" stroke-dasharray="4 2"/><line x1="45.95" y1="70.50" x2="328.55" y2="70.50" stroke="#e8eaee" stroke-width="1" stroke-dasharray="4 2"/><line x1="50.50" y1="170" x2="50.50" y2="174.50" stroke="#e8eaee" stroke-width="1"/><line x1="96.50" y1="170" x2="96.50" y2="174.50" stroke="#e8eaee" stroke-width="1"/><line x1="141.50" y1="170" x2="141.50" y2="174.50" stroke="#e8eaee" stroke-width="1"/><line x1="187.50" y1="170" x2="187.50" y2="174.50" stroke="#e8eaee" stroke-width="1"/><line x1="232.50" y1="170" x2="232.50" y2="174.50" stroke="#e8eaee" stroke-width="1"/><line x1="278.50" y1="170" x2="278.50" y2="174.50" stroke="#e8eaee" stroke-width="1"/><line x1="323.50" y1="170" x2="323.50" y2="174.50" stroke="#e8eaee" stroke-width="1"/><polyline points="50.51,168.78 59.62,168.78 68.74,168.78 77.86,168.78 86.97,168.78 96.09,168.78 105.20,168.78 114.32,168.78 123.44,168.78 132.55,168.78 141.67,168.78 150.79,168.78 159.90,168.78 169.02,168.78 178.13,168.78 187.25,168.78 196.37,168.78 205.48,168.78 214.60,168.78 223.71,168.78 232.83,168.78 241.95,168.78 251.06,168.78 260.18,168.78 269.30,168.78 278.41,168.78 287.53,168.78 296.64,168.78 305.76,168.78 314.88,168.78 323.99,168.78" fill="none" stroke="#fdd35a" stroke-width="1.6" stroke-linejoin="round"/><polyline points="50.51,169.56 59.62,169.56 68.74,169.56 77.86,169.56 86.97,169.56 96.09,169.56 105.20,169.56 114.32,169.56 123.44,169.56 132.55,169.56 141.67,169.56 150.79,169.56 159.90,169.56 169.02,169.56 178.13,169.56 187.25,169.56 196.37,169.56 205.48,169.56 214.60,169.56 223.71,169.56 232.83,169.56 241.95,169.56 251.06,169.56 260.18,169.56 269.30,169.56 278.41,169.56 287.53,169.56 296.64,169.56 305.76,169.56 314.88,169.56 323.99,169.56" fill="none" stroke="#2e9ad6" stroke-width="1.6" stroke-linejoin="round"/><polyline points="50.51,169.17 59.62,169.17 68.74,169.17 77.86,169.17 86.97,169.17 96.09,169.17 105.20,169.17 114.32,169.17 123.44,169.17 132.55,169.17 141.67,169.17 150.79,169.17 159.90,169.17 169.02,169.17 178.13,169.17 187.25,169.17 196.37,169.17 205.48,167.78 214.60,169.17 223.71,169.17 232.83,169.17 241.95,169.17 251.06,169.17 260.18,169.17 269.30,169.17 278.41,169.17 287.53,169.17 296.64,167.22 305.76,169.17 314.88,169.17 323.99,169.17" fill="none" stroke="#6dbde9" stroke-width="1.6" stroke-linejoin="round"/><polyline points="50.51,168.33 59.62,168.33 68.74,168.33 77.86,168.33 86.97,168.33 96.09,168.33 105.20,168.33 114.32,167.50 123.44,168.33 132.55,168.33 141.67,168.33 150.79,168.33 159.90,168.33 169.02,168.33 178.13,168.33 187.25,168.33 196.37,168.33 205.48,166.67 214.60,168.33 223.71,168.33 232.83,168.33 241.95,168.33 251.06,168.33 260.18,168.33 269.30,168.33 278.41,168.33 287.53,168.33 296.64,162.22 305.76,168.33 314.88,168.33 323.99,168.33" fill="none" stroke="#f79677" stroke-width="1.6" stroke-linejoin="round"/><polyline points="50.51,167.44 59.62,167.44 68.74,167.44 77.86,167.44 86.97,167.44 96.09,167.44 105.20,167.44 114.32,77.61 123.44,167.44 132.55,167.44 141.67,167.44 150.79,167.44 159.90,167.44 169.02,167.44 178.13,167.44 187.25,167.44 196.37,167.44 205.48,125.50 214.60,167.44 223.71,167.44 232.83,167.44 241.95,167.44 251.06,167.44 260.18,167.44 269.30,167.44 278.41,167.44 287.53,167.44 296.64,82.22 305.76,167.44 314.88,167.44 323.99,167.44" fill="none" stroke="#e2569f" stroke-width="1.6" stroke-linejoin="round"/></svg>
<div class="t" style="left:987.40px;top:498.42px;font-size:12.5px;line-height:12.5px;color:#43474e;">P50</div>
<div class="t" style="left:1036.40px;top:498.42px;font-size:12.5px;line-height:12.5px;color:#43474e;">P75</div>
<div class="t" style="left:1085.40px;top:498.42px;font-size:12.5px;line-height:12.5px;color:#43474e;">P90</div>
<div class="t" style="left:1134.40px;top:498.42px;font-size:12.5px;line-height:12.5px;color:#43474e;">P95</div>
<div class="t" style="left:1183.40px;top:498.42px;font-size:12.5px;line-height:12.5px;color:#43474e;">P99</div>
<svg class="b" style="left:954.5px;top:457px" width="347" height="100"><defs><pattern id="dec" width="2.2" height="2.2" patternUnits="userSpaceOnUse"><circle cx="1.1" cy="1.1" r="0.5" fill="#fde3a0"/></pattern></defs><circle cx="21.5" cy="47.39999999999998" r="6" fill="#2e9ad6"/><circle cx="70.5" cy="47.39999999999998" r="6" fill="#6dbde9"/><circle cx="119.5" cy="47.39999999999998" r="6" fill="#fdd35a"/><circle cx="168.5" cy="47.39999999999998" r="6" fill="#f79677"/><circle cx="168.5" cy="47.39999999999998" r="6" fill="url(#dec)"/><circle cx="217.5" cy="47.39999999999998" r="6" fill="#e2569f"/></svg>
<div class="t" style="left:1273.60px;width:60px;top:621.99px;font-size:11px;line-height:11px;color:#959ba6;text-align:right;">0</div>
<div class="t" style="left:1273.60px;width:60px;top:601.16px;font-size:11px;line-height:11px;color:#959ba6;text-align:right;">2</div>
<div class="t" style="left:1273.60px;width:60px;top:580.32px;font-size:11px;line-height:11px;color:#959ba6;text-align:right;">4</div>
<div class="t" style="left:1273.60px;width:60px;top:559.49px;font-size:11px;line-height:11px;color:#959ba6;text-align:right;">6</div>
<div class="t" style="left:1273.60px;width:60px;top:538.66px;font-size:11px;line-height:11px;color:#959ba6;text-align:right;">8</div>
<div class="t" style="left:1273.60px;width:60px;top:517.82px;font-size:11px;line-height:11px;color:#959ba6;text-align:right;">10</div>
<div class="t" style="left:1273.60px;width:60px;top:496.99px;font-size:11px;line-height:11px;color:#959ba6;text-align:right;">12</div>
<div class="t" style="left:1316.41px;width:60px;top:635.13px;font-size:11.3px;line-height:11.3px;color:#959ba6;text-align:center;letter-spacing:-0.25px">21:53</div>
<div class="t" style="left:1316.41px;width:60px;top:646.33px;font-size:11.3px;line-height:11.3px;color:#959ba6;text-align:center;letter-spacing:-0.85px">11–12</div>
<div class="t" style="left:1354.86px;width:60px;top:635.13px;font-size:11.3px;line-height:11.3px;color:#959ba6;text-align:center;letter-spacing:-0.25px">21:57</div>
<div class="t" style="left:1354.86px;width:60px;top:646.33px;font-size:11.3px;line-height:11.3px;color:#959ba6;text-align:center;letter-spacing:-0.85px">11–12</div>
<div class="t" style="left:1393.31px;width:60px;top:635.13px;font-size:11.3px;line-height:11.3px;color:#959ba6;text-align:center;letter-spacing:-0.25px">22:01</div>
<div class="t" style="left:1393.31px;width:60px;top:646.33px;font-size:11.3px;line-height:11.3px;color:#959ba6;text-align:center;letter-spacing:-0.85px">11–12</div>
<div class="t" style="left:1431.76px;width:60px;top:635.13px;font-size:11.3px;line-height:11.3px;color:#959ba6;text-align:center;letter-spacing:-0.25px">22:05</div>
<div class="t" style="left:1431.76px;width:60px;top:646.33px;font-size:11.3px;line-height:11.3px;color:#959ba6;text-align:center;letter-spacing:-0.85px">11–12</div>
<div class="t" style="left:1470.21px;width:60px;top:635.13px;font-size:11.3px;line-height:11.3px;color:#959ba6;text-align:center;letter-spacing:-0.25px">22:09</div>
<div class="t" style="left:1470.21px;width:60px;top:646.33px;font-size:11.3px;line-height:11.3px;color:#959ba6;text-align:center;letter-spacing:-0.85px">11–12</div>
<div class="t" style="left:1508.66px;width:60px;top:635.13px;font-size:11.3px;line-height:11.3px;color:#959ba6;text-align:center;letter-spacing:-0.25px">22:13</div>
<div class="t" style="left:1508.66px;width:60px;top:646.33px;font-size:11.3px;line-height:11.3px;color:#959ba6;text-align:center;letter-spacing:-0.85px">11–12</div>
<div class="t" style="left:1547.12px;width:60px;top:635.13px;font-size:11.3px;line-height:11.3px;color:#959ba6;text-align:center;letter-spacing:-0.25px">22:17</div>
<div class="t" style="left:1547.12px;width:60px;top:646.33px;font-size:11.3px;line-height:11.3px;color:#959ba6;text-align:center;letter-spacing:-0.85px">11–12</div>
<div class="t" style="left:1585.57px;width:60px;top:635.13px;font-size:11.3px;line-height:11.3px;color:#959ba6;text-align:center;letter-spacing:-0.25px">22:21</div>
<div class="t" style="left:1585.57px;width:60px;top:646.33px;font-size:11.3px;line-height:11.3px;color:#959ba6;text-align:center;letter-spacing:-0.85px">11–12</div>
<svg class="b" style="left:1311px;top:457px" width="349" height="210"><line x1="30.60" y1="170.50" x2="328.60" y2="170.50" stroke="#e8eaee" stroke-width="1" stroke-dasharray="4 2"/><line x1="30.60" y1="149.67" x2="328.60" y2="149.67" stroke="#e8eaee" stroke-width="1" stroke-dasharray="4 2"/><line x1="30.60" y1="128.83" x2="328.60" y2="128.83" stroke="#e8eaee" stroke-width="1" stroke-dasharray="4 2"/><line x1="30.60" y1="108.00" x2="328.60" y2="108.00" stroke="#e8eaee" stroke-width="1" stroke-dasharray="4 2"/><line x1="30.60" y1="87.17" x2="328.60" y2="87.17" stroke="#e8eaee" stroke-width="1" stroke-dasharray="4 2"/><line x1="30.60" y1="66.33" x2="328.60" y2="66.33" stroke="#e8eaee" stroke-width="1" stroke-dasharray="4 2"/><line x1="30.60" y1="45.50" x2="328.60" y2="45.50" stroke="#e8eaee" stroke-width="1" stroke-dasharray="4 2"/><line x1="35.50" y1="170" x2="35.50" y2="174.50" stroke="#e8eaee" stroke-width="1"/><line x1="73.50" y1="170" x2="73.50" y2="174.50" stroke="#e8eaee" stroke-width="1"/><line x1="112.50" y1="170" x2="112.50" y2="174.50" stroke="#e8eaee" stroke-width="1"/><line x1="150.50" y1="170" x2="150.50" y2="174.50" stroke="#e8eaee" stroke-width="1"/><line x1="189.50" y1="170" x2="189.50" y2="174.50" stroke="#e8eaee" stroke-width="1"/><line x1="227.50" y1="170" x2="227.50" y2="174.50" stroke="#e8eaee" stroke-width="1"/><line x1="266.50" y1="170" x2="266.50" y2="174.50" stroke="#e8eaee" stroke-width="1"/><line x1="304.50" y1="170" x2="304.50" y2="174.50" stroke="#e8eaee" stroke-width="1"/><polyline points="35.41,45.00 45.02,45.00 54.63,55.42 64.25,45.00 73.86,45.00 83.47,45.00 93.08,45.00 102.70,55.42 112.31,45.00 121.92,45.00 131.54,45.00 141.15,45.00 150.76,76.25 160.37,45.00 169.99,45.00 179.60,45.00 189.21,45.00 198.83,55.42 208.44,45.00 218.05,45.00 227.66,45.00 237.28,45.00 246.89,55.42 256.50,45.00 266.12,45.00 275.73,45.00 285.34,45.00 294.95,45.00 304.57,45.00 314.18,45.00 323.79,45.00" fill="none" stroke="#5ab1e0" stroke-width="2" stroke-linejoin="round"/></svg>
<div class="b" style="left:240.6px;top:677px;width:466.4px;height:210px;background:#fff;border-radius:4px;box-shadow:0 0 0 1px rgba(215,220,228,0.45),0 1px 4px rgba(0,0,0,0.08);"></div>
<div class="b" style="left:240.6px;top:706px;width:466.4px;height:1px;background:#eceef1"></div>
<div class="t" style="left:245.90px;top:684.84px;font-size:12px;line-height:12px;color:#2f3237;">Success Rate (%)</div>
<div class="b" style="left:716.5px;top:677px;width:466.4px;height:210px;background:#fff;border-radius:4px;box-shadow:0 0 0 1px rgba(215,220,228,0.45),0 1px 4px rgba(0,0,0,0.08);"></div>
<div class="b" style="left:716.5px;top:706px;width:466.4px;height:1px;background:#eceef1"></div>
<div class="t" style="left:721.80px;top:684.84px;font-size:12px;line-height:12px;color:#2f3237;">Message Queue Consuming Count</div>
<div class="b" style="left:1192.5px;top:677px;width:466.4px;height:210px;background:#fff;border-radius:4px;box-shadow:0 0 0 1px rgba(215,220,228,0.45),0 1px 4px rgba(0,0,0,0.08);"></div>
<div class="b" style="left:1192.5px;top:706px;width:466.4px;height:1px;background:#eceef1"></div>
<div class="t" style="left:1197.80px;top:684.84px;font-size:12px;line-height:12px;color:#2f3237;">Message Queue Avg Consuming Latency (ms)</div>
<svg class="b" style="left:1641.9px;top:685px" width="14" height="14"><circle cx="6" cy="7" r="5.3" fill="none" stroke="#2f3237" stroke-width="1.2"/><rect x="5.4" y="5.6" width="1.2" height="4" fill="#2f3237"/><rect x="5.4" y="3.8" width="1.2" height="1.2" fill="#2f3237"/></svg>
<div class="t" style="left:204.80px;width:60px;top:841.99px;font-size:11px;line-height:11px;color:#959ba6;text-align:right;">0</div>
<div class="t" style="left:204.80px;width:60px;top:816.99px;font-size:11px;line-height:11px;color:#959ba6;text-align:right;">10</div>
<div class="t" style="left:204.80px;width:60px;top:791.99px;font-size:11px;line-height:11px;color:#959ba6;text-align:right;">20</div>
<div class="t" style="left:204.80px;width:60px;top:766.99px;font-size:11px;line-height:11px;color:#959ba6;text-align:right;">30</div>
<div class="t" style="left:204.80px;width:60px;top:741.99px;font-size:11px;line-height:11px;color:#959ba6;text-align:right;">40</div>
<div class="t" style="left:204.80px;width:60px;top:716.99px;font-size:11px;line-height:11px;color:#959ba6;text-align:right;">50</div>
<div class="t" style="left:249.48px;width:60px;top:855.13px;font-size:11.3px;line-height:11.3px;color:#959ba6;text-align:center;letter-spacing:-0.25px">21:53</div>
<div class="t" style="left:249.48px;width:60px;top:866.33px;font-size:11.3px;line-height:11.3px;color:#959ba6;text-align:center;letter-spacing:-0.85px">11–12</div>
<div class="t" style="left:289.59px;width:60px;top:855.13px;font-size:11.3px;line-height:11.3px;color:#959ba6;text-align:center;letter-spacing:-0.25px">21:56</div>
<div class="t" style="left:289.59px;width:60px;top:866.33px;font-size:11.3px;line-height:11.3px;color:#959ba6;text-align:center;letter-spacing:-0.85px">11–12</div>
<div class="t" style="left:329.69px;width:60px;top:855.13px;font-size:11.3px;line-height:11.3px;color:#959ba6;text-align:center;letter-spacing:-0.25px">21:59</div>
<div class="t" style="left:329.69px;width:60px;top:866.33px;font-size:11.3px;line-height:11.3px;color:#959ba6;text-align:center;letter-spacing:-0.85px">11–12</div>
<div class="t" style="left:369.79px;width:60px;top:855.13px;font-size:11.3px;line-height:11.3px;color:#959ba6;text-align:center;letter-spacing:-0.25px">22:02</div>
<div class="t" style="left:369.79px;width:60px;top:866.33px;font-size:11.3px;line-height:11.3px;color:#959ba6;text-align:center;letter-spacing:-0.85px">11–12</div>
<div class="t" style="left:409.90px;width:60px;top:855.13px;font-size:11.3px;line-height:11.3px;color:#959ba6;text-align:center;letter-spacing:-0.25px">22:05</div>
<div class="t" style="left:409.90px;width:60px;top:866.33px;font-size:11.3px;line-height:11.3px;color:#959ba6;text-align:center;letter-spacing:-0.85px">11–12</div>
<div class="t" style="left:450.00px;width:60px;top:855.13px;font-size:11.3px;line-height:11.3px;color:#959ba6;text-align:center;letter-spacing:-0.25px">22:08</div>
<div class="t" style="left:450.00px;width:60px;top:866.33px;font-size:11.3px;line-height:11.3px;color:#959ba6;text-align:center;letter-spacing:-0.85px">11–12</div>
<div class="t" style="left:490.10px;width:60px;top:855.13px;font-size:11.3px;line-height:11.3px;color:#959ba6;text-align:center;letter-spacing:-0.25px">22:11</div>
<div class="t" style="left:490.10px;width:60px;top:866.33px;font-size:11.3px;line-height:11.3px;color:#959ba6;text-align:center;letter-spacing:-0.85px">11–12</div>
<div class="t" style="left:530.21px;width:60px;top:855.13px;font-size:11.3px;line-height:11.3px;color:#959ba6;text-align:center;letter-spacing:-0.25px">22:14</div>
<div class="t" style="left:530.21px;width:60px;top:866.33px;font-size:11.3px;line-height:11.3px;color:#959ba6;text-align:center;letter-spacing:-0.85px">11–12</div>
<div class="t" style="left:570.31px;width:60px;top:855.13px;font-size:11.3px;line-height:11.3px;color:#959ba6;text-align:center;letter-spacing:-0.25px">22:17</div>
<div class="t" style="left:570.31px;width:60px;top:866.33px;font-size:11.3px;line-height:11.3px;color:#959ba6;text-align:center;letter-spacing:-0.85px">11–12</div>
<div class="t" style="left:610.41px;width:60px;top:855.13px;font-size:11.3px;line-height:11.3px;color:#959ba6;text-align:center;letter-spacing:-0.25px">22:20</div>
<div class="t" style="left:610.41px;width:60px;top:866.33px;font-size:11.3px;line-height:11.3px;color:#959ba6;text-align:center;letter-spacing:-0.85px">11–12</div>
<div class="t" style="left:650.52px;width:60px;top:855.13px;font-size:11.3px;line-height:11.3px;color:#959ba6;text-align:center;letter-spacing:-0.25px">22:23</div>
<div class="t" style="left:650.52px;width:60px;top:866.33px;font-size:11.3px;line-height:11.3px;color:#959ba6;text-align:center;letter-spacing:-0.85px">11–12</div>
<svg class="b" style="left:240px;top:677px" width="468" height="210"><line x1="32.80" y1="170.50" x2="447.20" y2="170.50" stroke="#e8eaee" stroke-width="1" stroke-dasharray="4 2"/><line x1="32.80" y1="145.50" x2="447.20" y2="145.50" stroke="#e8eaee" stroke-width="1" stroke-dasharray="4 2"/><line x1="32.80" y1="120.50" x2="447.20" y2="120.50" stroke="#e8eaee" stroke-width="1" stroke-dasharray="4 2"/><line x1="32.80" y1="95.50" x2="447.20" y2="95.50" stroke="#e8eaee" stroke-width="1" stroke-dasharray="4 2"/><line x1="32.80" y1="70.50" x2="447.20" y2="70.50" stroke="#e8eaee" stroke-width="1" stroke-dasharray="4 2"/><line x1="32.80" y1="45.50" x2="447.20" y2="45.50" stroke="#e8eaee" stroke-width="1" stroke-dasharray="4 2"/><line x1="39.50" y1="170" x2="39.50" y2="174.50" stroke="#e8eaee" stroke-width="1"/><line x1="79.50" y1="170" x2="79.50" y2="174.50" stroke="#e8eaee" stroke-width="1"/><line x1="119.50" y1="170" x2="119.50" y2="174.50" stroke="#e8eaee" stroke-width="1"/><line x1="159.50" y1="170" x2="159.50" y2="174.50" stroke="#e8eaee" stroke-width="1"/><line x1="199.50" y1="170" x2="199.50" y2="174.50" stroke="#e8eaee" stroke-width="1"/><line x1="239.50" y1="170" x2="239.50" y2="174.50" stroke="#e8eaee" stroke-width="1"/><line x1="280.50" y1="170" x2="280.50" y2="174.50" stroke="#e8eaee" stroke-width="1"/><line x1="320.50" y1="170" x2="320.50" y2="174.50" stroke="#e8eaee" stroke-width="1"/><line x1="360.50" y1="170" x2="360.50" y2="174.50" stroke="#e8eaee" stroke-width="1"/><line x1="400.50" y1="170" x2="400.50" y2="174.50" stroke="#e8eaee" stroke-width="1"/><line x1="440.50" y1="170" x2="440.50" y2="174.50" stroke="#e8eaee" stroke-width="1"/><polyline points="39.48,45.00 52.85,45.00 66.22,55.75 79.59,45.00 92.95,45.00 106.32,45.00 119.69,45.00 133.06,55.75 146.43,45.00 159.79,45.00 173.16,45.00 186.53,45.00 199.90,58.75 213.26,45.00 226.63,45.00 240.00,45.00 253.37,45.00 266.74,55.75 280.10,45.00 293.47,45.00 306.84,45.00 320.21,45.00 333.57,55.75 346.94,45.00 360.31,45.00 373.68,45.00 387.05,45.00 400.41,45.00 413.78,45.00 427.15,45.00 440.52,45.00" fill="none" stroke="#5ab1e0" stroke-width="2" stroke-linejoin="round"/></svg>
<div class="t" style="left:682.85px;width:60px;top:841.99px;font-size:11px;line-height:11px;color:#959ba6;text-align:right;">0</div>
<div class="t" style="left:682.85px;width:60px;top:816.99px;font-size:11px;line-height:11px;color:#959ba6;text-align:right;">0.2</div>
<div class="t" style="left:682.85px;width:60px;top:791.99px;font-size:11px;line-height:11px;color:#959ba6;text-align:right;">0.4</div>
<div class="t" style="left:682.85px;width:60px;top:766.99px;font-size:11px;line-height:11px;color:#959ba6;text-align:right;">0.6</div>
<div class="t" style="left:682.85px;width:60px;top:741.99px;font-size:11px;line-height:11px;color:#959ba6;text-align:right;">0.8</div>
<div class="t" style="left:682.85px;width:60px;top:716.99px;font-size:11px;line-height:11px;color:#959ba6;text-align:right;">1</div>
<div class="t" style="left:727.50px;width:60px;top:855.13px;font-size:11.3px;line-height:11.3px;color:#959ba6;text-align:center;letter-spacing:-0.25px">21:53</div>
<div class="t" style="left:727.50px;width:60px;top:866.33px;font-size:11.3px;line-height:11.3px;color:#959ba6;text-align:center;letter-spacing:-0.85px">11–12</div>
<div class="t" style="left:767.40px;width:60px;top:855.13px;font-size:11.3px;line-height:11.3px;color:#959ba6;text-align:center;letter-spacing:-0.25px">21:56</div>
<div class="t" style="left:767.40px;width:60px;top:866.33px;font-size:11.3px;line-height:11.3px;color:#959ba6;text-align:center;letter-spacing:-0.85px">11–12</div>
<div class="t" style="left:807.30px;width:60px;top:855.13px;font-size:11.3px;line-height:11.3px;color:#959ba6;text-align:center;letter-spacing:-0.25px">21:59</div>
<div class="t" style="left:807.30px;width:60px;top:866.33px;font-size:11.3px;line-height:11.3px;color:#959ba6;text-align:center;letter-spacing:-0.85px">11–12</div>
<div class="t" style="left:847.20px;width:60px;top:855.13px;font-size:11.3px;line-height:11.3px;color:#959ba6;text-align:center;letter-spacing:-0.25px">22:02</div>
<div class="t" style="left:847.20px;width:60px;top:866.33px;font-size:11.3px;line-height:11.3px;color:#959ba6;text-align:center;letter-spacing:-0.85px">11–12</div>
<div class="t" style="left:887.10px;width:60px;top:855.13px;font-size:11.3px;line-height:11.3px;color:#959ba6;text-align:center;letter-spacing:-0.25px">22:05</div>
<div class="t" style="left:887.10px;width:60px;top:866.33px;font-size:11.3px;line-height:11.3px;color:#959ba6;text-align:center;letter-spacing:-0.85px">11–12</div>
<div class="t" style="left:927.00px;width:60px;top:855.13px;font-size:11.3px;line-height:11.3px;color:#959ba6;text-align:center;letter-spacing:-0.25px">22:08</div>
<div class="t" style="left:927.00px;width:60px;top:866.33px;font-size:11.3px;line-height:11.3px;color:#959ba6;text-align:center;letter-spacing:-0.85px">11–12</div>
<div class="t" style="left:966.90px;width:60px;top:855.13px;font-size:11.3px;line-height:11.3px;color:#959ba6;text-align:center;letter-spacing:-0.25px">22:11</div>
<div class="t" style="left:966.90px;width:60px;top:866.33px;font-size:11.3px;line-height:11.3px;color:#959ba6;text-align:center;letter-spacing:-0.85px">11–12</div>
<div class="t" style="left:1006.80px;width:60px;top:855.13px;font-size:11.3px;line-height:11.3px;color:#959ba6;text-align:center;letter-spacing:-0.25px">22:14</div>
<div class="t" style="left:1006.80px;width:60px;top:866.33px;font-size:11.3px;line-height:11.3px;color:#959ba6;text-align:center;letter-spacing:-0.85px">11–12</div>
<div class="t" style="left:1046.70px;width:60px;top:855.13px;font-size:11.3px;line-height:11.3px;color:#959ba6;text-align:center;letter-spacing:-0.25px">22:17</div>
<div class="t" style="left:1046.70px;width:60px;top:866.33px;font-size:11.3px;line-height:11.3px;color:#959ba6;text-align:center;letter-spacing:-0.85px">11–12</div>
<div class="t" style="left:1086.60px;width:60px;top:855.13px;font-size:11.3px;line-height:11.3px;color:#959ba6;text-align:center;letter-spacing:-0.25px">22:20</div>
<div class="t" style="left:1086.60px;width:60px;top:866.33px;font-size:11.3px;line-height:11.3px;color:#959ba6;text-align:center;letter-spacing:-0.85px">11–12</div>
<div class="t" style="left:1126.50px;width:60px;top:855.13px;font-size:11.3px;line-height:11.3px;color:#959ba6;text-align:center;letter-spacing:-0.25px">22:23</div>
<div class="t" style="left:1126.50px;width:60px;top:866.33px;font-size:11.3px;line-height:11.3px;color:#959ba6;text-align:center;letter-spacing:-0.85px">11–12</div>
<svg class="b" style="left:716px;top:677px" width="468" height="210"><line x1="34.85" y1="170.50" x2="447.15" y2="170.50" stroke="#e8eaee" stroke-width="1" stroke-dasharray="4 2"/><line x1="34.85" y1="145.50" x2="447.15" y2="145.50" stroke="#e8eaee" stroke-width="1" stroke-dasharray="4 2"/><line x1="34.85" y1="120.50" x2="447.15" y2="120.50" stroke="#e8eaee" stroke-width="1" stroke-dasharray="4 2"/><line x1="34.85" y1="95.50" x2="447.15" y2="95.50" stroke="#e8eaee" stroke-width="1" stroke-dasharray="4 2"/><line x1="34.85" y1="70.50" x2="447.15" y2="70.50" stroke="#e8eaee" stroke-width="1" stroke-dasharray="4 2"/><line x1="34.85" y1="45.50" x2="447.15" y2="45.50" stroke="#e8eaee" stroke-width="1" stroke-dasharray="4 2"/><line x1="41.50" y1="170" x2="41.50" y2="174.50" stroke="#e8eaee" stroke-width="1"/><line x1="81.50" y1="170" x2="81.50" y2="174.50" stroke="#e8eaee" stroke-width="1"/><line x1="121.50" y1="170" x2="121.50" y2="174.50" stroke="#e8eaee" stroke-width="1"/><line x1="161.50" y1="170" x2="161.50" y2="174.50" stroke="#e8eaee" stroke-width="1"/><line x1="201.50" y1="170" x2="201.50" y2="174.50" stroke="#e8eaee" stroke-width="1"/><line x1="240.50" y1="170" x2="240.50" y2="174.50" stroke="#e8eaee" stroke-width="1"/><line x1="280.50" y1="170" x2="280.50" y2="174.50" stroke="#e8eaee" stroke-width="1"/><line x1="320.50" y1="170" x2="320.50" y2="174.50" stroke="#e8eaee" stroke-width="1"/><line x1="360.50" y1="170" x2="360.50" y2="174.50" stroke="#e8eaee" stroke-width="1"/><line x1="400.50" y1="170" x2="400.50" y2="174.50" stroke="#e8eaee" stroke-width="1"/><line x1="440.50" y1="170" x2="440.50" y2="174.50" stroke="#e8eaee" stroke-width="1"/><polyline points="41.50,170.00 54.80,170.00 68.10,170.00 81.40,170.00 94.70,170.00 108.00,170.00 121.30,170.00 134.60,170.00 147.90,170.00 161.20,170.00 174.50,170.00 187.80,170.00 201.10,170.00 214.40,170.00 227.70,170.00 241.00,170.00 254.30,170.00 267.60,170.00 280.90,170.00 294.20,170.00 307.50,170.00 320.80,170.00 334.10,170.00 347.40,170.00 360.70,170.00 374.00,170.00 387.30,170.00 400.60,170.00 413.90,170.00 427.20,170.00 440.50,170.00" fill="none" stroke="#5ab1e0" stroke-width="2" stroke-linejoin="round"/></svg>
<div class="t" style="left:1158.85px;width:60px;top:841.99px;font-size:11px;line-height:11px;color:#959ba6;text-align:right;">0</div>
<div class="t" style="left:1158.85px;width:60px;top:816.99px;font-size:11px;line-height:11px;color:#959ba6;text-align:right;">0.2</div>
<div class="t" style="left:1158.85px;width:60px;top:791.99px;font-size:11px;line-height:11px;color:#959ba6;text-align:right;">0.4</div>
<div class="t" style="left:1158.85px;width:60px;top:766.99px;font-size:11px;line-height:11px;color:#959ba6;text-align:right;">0.6</div>
<div class="t" style="left:1158.85px;width:60px;top:741.99px;font-size:11px;line-height:11px;color:#959ba6;text-align:right;">0.8</div>
<div class="t" style="left:1158.85px;width:60px;top:716.99px;font-size:11px;line-height:11px;color:#959ba6;text-align:right;">1</div>
<div class="t" style="left:1203.50px;width:60px;top:855.13px;font-size:11.3px;line-height:11.3px;color:#959ba6;text-align:center;letter-spacing:-0.25px">21:53</div>
<div class="t" style="left:1203.50px;width:60px;top:866.33px;font-size:11.3px;line-height:11.3px;color:#959ba6;text-align:center;letter-spacing:-0.85px">11–12</div>
<div class="t" style="left:1243.40px;width:60px;top:855.13px;font-size:11.3px;line-height:11.3px;color:#959ba6;text-align:center;letter-spacing:-0.25px">21:56</div>
<div class="t" style="left:1243.40px;width:60px;top:866.33px;font-size:11.3px;line-height:11.3px;color:#959ba6;text-align:center;letter-spacing:-0.85px">11–12</div>
<div class="t" style="left:1283.30px;width:60px;top:855.13px;font-size:11.3px;line-height:11.3px;color:#959ba6;text-align:center;letter-spacing:-0.25px">21:59</div>
<div class="t" style="left:1283.30px;width:60px;top:866.33px;font-size:11.3px;line-height:11.3px;color:#959ba6;text-align:center;letter-spacing:-0.85px">11–12</div>
<div class="t" style="left:1323.20px;width:60px;top:855.13px;font-size:11.3px;line-height:11.3px;color:#959ba6;text-align:center;letter-spacing:-0.25px">22:02</div>
<div class="t" style="left:1323.20px;width:60px;top:866.33px;font-size:11.3px;line-height:11.3px;color:#959ba6;text-align:center;letter-spacing:-0.85px">11–12</div>
<div class="t" style="left:1363.10px;width:60px;top:855.13px;font-size:11.3px;line-height:11.3px;color:#959ba6;text-align:center;letter-spacing:-0.25px">22:05</div>
<div class="t" style="left:1363.10px;width:60px;top:866.33px;font-size:11.3px;line-height:11.3px;color:#959ba6;text-align:center;letter-spacing:-0.85px">11–12</div>
<div class="t" style="left:1403.00px;width:60px;top:855.13px;font-size:11.3px;line-height:11.3px;color:#959ba6;text-align:center;letter-spacing:-0.25px">22:08</div>
<div class="t" style="left:1403.00px;width:60px;top:866.33px;font-size:11.3px;line-height:11.3px;color:#959ba6;text-align:center;letter-spacing:-0.85px">11–12</div>
<div class="t" style="left:1442.90px;width:60px;top:855.13px;font-size:11.3px;line-height:11.3px;color:#959ba6;text-align:center;letter-spacing:-0.25px">22:11</div>
<div class="t" style="left:1442.90px;width:60px;top:866.33px;font-size:11.3px;line-height:11.3px;color:#959ba6;text-align:center;letter-spacing:-0.85px">11–12</div>
<div class="t" style="left:1482.80px;width:60px;top:855.13px;font-size:11.3px;line-height:11.3px;color:#959ba6;text-align:center;letter-spacing:-0.25px">22:14</div>
<div class="t" style="left:1482.80px;width:60px;top:866.33px;font-size:11.3px;line-height:11.3px;color:#959ba6;text-align:center;letter-spacing:-0.85px">11–12</div>
<div class="t" style="left:1522.70px;width:60px;top:855.13px;font-size:11.3px;line-height:11.3px;color:#959ba6;text-align:center;letter-spacing:-0.25px">22:17</div>
<div class="t" style="left:1522.70px;width:60px;top:866.33px;font-size:11.3px;line-height:11.3px;color:#959ba6;text-align:center;letter-spacing:-0.85px">11–12</div>
<div class="t" style="left:1562.60px;width:60px;top:855.13px;font-size:11.3px;line-height:11.3px;color:#959ba6;text-align:center;letter-spacing:-0.25px">22:20</div>
<div class="t" style="left:1562.60px;width:60px;top:866.33px;font-size:11.3px;line-height:11.3px;color:#959ba6;text-align:center;letter-spacing:-0.85px">11–12</div>
<div class="t" style="left:1602.50px;width:60px;top:855.13px;font-size:11.3px;line-height:11.3px;color:#959ba6;text-align:center;letter-spacing:-0.25px">22:23</div>
<div class="t" style="left:1602.50px;width:60px;top:866.33px;font-size:11.3px;line-height:11.3px;color:#959ba6;text-align:center;letter-spacing:-0.85px">11–12</div>
<svg class="b" style="left:1192px;top:677px" width="468" height="210"><line x1="34.85" y1="170.50" x2="447.15" y2="170.50" stroke="#e8eaee" stroke-width="1" stroke-dasharray="4 2"/><line x1="34.85" y1="145.50" x2="447.15" y2="145.50" stroke="#e8eaee" stroke-width="1" stroke-dasharray="4 2"/><line x1="34.85" y1="120.50" x2="447.15" y2="120.50" stroke="#e8eaee" stroke-width="1" stroke-dasharray="4 2"/><line x1="34.85" y1="95.50" x2="447.15" y2="95.50" stroke="#e8eaee" stroke-width="1" stroke-dasharray="4 2"/><line x1="34.85" y1="70.50" x2="447.15" y2="70.50" stroke="#e8eaee" stroke-width="1" stroke-dasharray="4 2"/><line x1="34.85" y1="45.50" x2="447.15" y2="45.50" stroke="#e8eaee" stroke-width="1" stroke-dasharray="4 2"/><line x1="41.50" y1="170" x2="41.50" y2="174.50" stroke="#e8eaee" stroke-width="1"/><line x1="81.50" y1="170" x2="81.50" y2="174.50" stroke="#e8eaee" stroke-width="1"/><line x1="121.50" y1="170" x2="121.50" y2="174.50" stroke="#e8eaee" stroke-width="1"/><line x1="161.50" y1="170" x2="161.50" y2="174.50" stroke="#e8eaee" stroke-width="1"/><line x1="201.50" y1="170" x2="201.50" y2="174.50" stroke="#e8eaee" stroke-width="1"/><line x1="240.50" y1="170" x2="240.50" y2="174.50" stroke="#e8eaee" stroke-width="1"/><line x1="280.50" y1="170" x2="280.50" y2="174.50" stroke="#e8eaee" stroke-width="1"/><line x1="320.50" y1="170" x2="320.50" y2="174.50" stroke="#e8eaee" stroke-width="1"/><line x1="360.50" y1="170" x2="360.50" y2="174.50" stroke="#e8eaee" stroke-width="1"/><line x1="400.50" y1="170" x2="400.50" y2="174.50" stroke="#e8eaee" stroke-width="1"/><line x1="440.50" y1="170" x2="440.50" y2="174.50" stroke="#e8eaee" stroke-width="1"/><polyline points="41.50,170.00 54.80,170.00 68.10,170.00 81.40,170.00 94.70,170.00 108.00,170.00 121.30,170.00 134.60,170.00 147.90,170.00 161.20,170.00 174.50,170.00 187.80,170.00 201.10,170.00 214.40,170.00 227.70,170.00 241.00,170.00 254.30,170.00 267.60,170.00 280.90,170.00 294.20,170.00 307.50,170.00 320.80,170.00 334.10,170.00 347.40,170.00 360.70,170.00 374.00,170.00 387.30,170.00 400.60,170.00 413.90,170.00 427.20,170.00 440.50,170.00" fill="none" stroke="#5ab1e0" stroke-width="2" stroke-linejoin="round"/></svg>
</body></html>
